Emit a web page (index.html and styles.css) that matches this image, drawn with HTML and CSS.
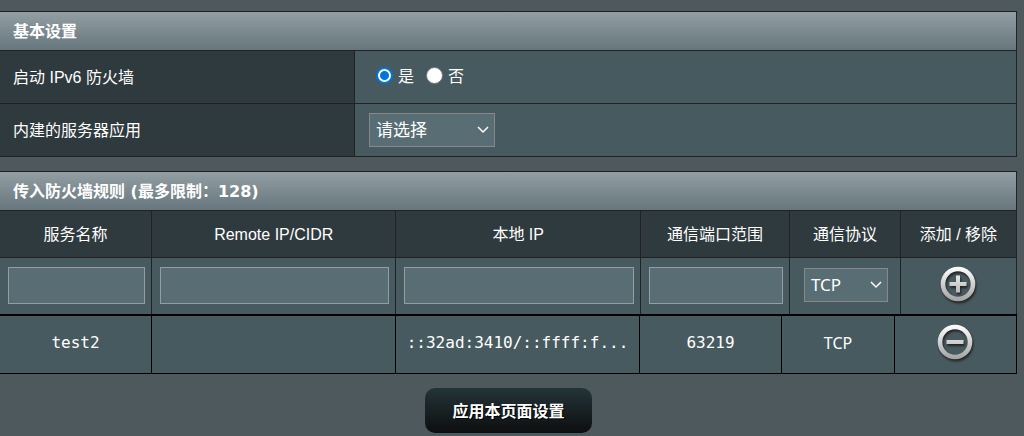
FILE: index.html
```
<!DOCTYPE html>
<html lang="zh-CN">
<head>
	<meta charset="utf-8" />
	<title>IPv6 防火墙</title>
	<link rel="stylesheet" href="styles.css">
</head>

<body>
<form id="ruleForm" name="ruleForm" method="post" action="">

<table class="FormTable">
	<colgroup>
		<col class="col_label" />
		<col />
	</colgroup>
	<thead>
		<tr>
			<td colspan="2">基本设置</td>
		</tr>
	</thead>
	<tbody>
		<tr>
			<th scope="row">启动 IPv6 防火墙</th>
			<td>
				<div class="radios">
					<input type="radio" name="ipv6_fw_enable" id="fw_yes" value="1" checked="checked" />
					<label for="fw_yes">是</label>
					<input type="radio" name="ipv6_fw_enable" id="fw_no" value="0" />
					<label for="fw_no">否</label>
				</div>
			</td>
		</tr>
		<tr>
			<th scope="row"><label for="known_apps">内建的服务器应用</label></th>
			<td>
				<select name="known_apps" id="known_apps" class="input_option apps">
					<option>请选择</option>
				</select>
			</td>
		</tr>
	</tbody>
</table>

<table class="FormTable list_head">
	<colgroup>
		<col class="col_name" />
		<col />
		<col />
		<col class="col_port" />
		<col class="col_proto" />
		<col class="col_edit" />
	</colgroup>
	<thead>
		<tr>
			<td colspan="6">传入防火墙规则 (最多限制：128)</td>
		</tr>
	</thead>
	<tbody>
		<tr>
			<th scope="col">服务名称</th>
			<th scope="col">Remote IP/CIDR</th>
			<th scope="col">本地 IP</th>
			<th scope="col">通信端口范围</th>
			<th scope="col">通信协议</th>
			<th scope="col">添加 / 移除</th>
		</tr>
		<tr>
			<td><input type="text" class="input_text" name="rule_name" aria-label="服务名称" /></td>
			<td><input type="text" class="input_text" name="rule_remote" aria-label="Remote IP/CIDR" /></td>
			<td><input type="text" class="input_text" name="rule_local" aria-label="本地 IP" /></td>
			<td><input type="text" class="input_text" name="rule_port" aria-label="通信端口范围" /></td>
			<td>
				<select name="rule_proto" class="input_option proto" aria-label="通信协议">
					<option>TCP</option>
				</select>
			</td>
			<td>
				<button type="button" class="icon_btn" aria-label="添加">
					<svg width="40" height="40" viewBox="0 0 40 40">
						<defs>
							<linearGradient id="metal" gradientUnits="userSpaceOnUse" x1="0" y1="2" x2="0" y2="36">
								<stop offset="0" stop-color="#ffffff" />
								<stop offset="1" stop-color="#a2a2a2" />
							</linearGradient>
						</defs>
						<circle cx="19" cy="19" r="15" fill="none" stroke="url(#metal)" stroke-width="4.6" />
						<path d="M17 10.5h4v6.500h6.500v4h-6.500v6.500h-4v-6.500h-6.500v-4h6.500z" fill="url(#metal)" />
					</svg>
				</button>
			</td>
		</tr>
	</tbody>
</table>

<table class="list_table">
	<colgroup>
		<col class="col_name" />
		<col />
		<col />
		<col class="col_port" />
		<col class="col_proto" />
		<col class="col_edit" />
	</colgroup>
	<tbody>
		<tr>
			<td>test2</td>
			<td></td>
			<td>::32ad:3410/::ffff:f...</td>
			<td>63219</td>
			<td class="proto_name">TCP</td>
			<td>
				<button type="button" class="icon_btn" aria-label="移除">
					<svg width="40" height="40" viewBox="0 0 40 40">
						<circle cx="19" cy="19" r="15" fill="none" stroke="url(#metal)" stroke-width="4.6" />
						<path d="M10.500 17h17v4h-17z" fill="url(#metal)" />
					</svg>
				</button>
			</td>
		</tr>
	</tbody>
</table>

<div class="apply_gen">
	<button type="submit" class="button_gen">应用本页面设置</button>
</div>

</form>
</body>
</html>
```
FILE: styles.css
```
* {
	box-sizing: border-box;
}
body {
	margin: 0;
	padding: 11px 7px 0 0;
	background-color: #4D595D;
	color: #FFF;
	font-family: "Liberation Sans", "Noto Sans CJK SC", sans-serif;
	font-size: 16px;
	line-height: 24px;
}
table {
	width: 100%;
	table-layout: fixed;
	border-spacing: 0;
}
td, th {
	font-weight: normal;
}

/* form tables */
.FormTable {
	border-top: 1px solid #222;
	margin-bottom: 14px;
}
.FormTable td, .FormTable th {
	border-right: 1px solid #222;
	border-bottom: 1px solid #222;
	height: 53px;
	padding: 0 14px;
	text-align: left;
}
.FormTable th {
	background-color: #2F3A3E;
	padding: 2px 13px 0;
}
.FormTable td {
	background-color: #475A5F;
}
.FormTable thead td {
	background: linear-gradient(to bottom, #929EA3 0%, #67767D 100%);
	height: 39px;
	padding: 2px 13px 0;
	font-family: "DejaVu Sans", "Noto Sans CJK SC", sans-serif;
	font-size: 16px;
	font-weight: bold;
}
.col_label {
	width: 355px;
}

.radios {
	display: flex;
	align-items: center;
}
.radios input {
	width: 17px;
	height: 17px;
	margin: 0 5px 3px 7px;
	appearance: none;
	border: 1px solid #767676;
	border-radius: 50%;
	background-color: #FFF;
}
.radios input:checked {
	border: 2px solid #0075DB;
	background: radial-gradient(circle, #0075DB 4px, #FFF 5px);
}
.radios label {
	margin-right: 5px;
}

.input_text, .input_option {
	border: 1px solid #929EA1;
	background-color: #596E74;
	color: #FFF;
}
.input_text {
	display: block;
	width: 100%;
	height: 37px;
	padding: 0 5px;
	font-size: 16px;
}
.input_option {
	display: block;
	height: 34px;
	padding: 0 6px 1px;
	border-color: #888;
	appearance: none;
	font-family: "Noto Sans", "Noto Sans CJK SC", sans-serif;
	font-size: 17px;
	background-image: url("data:image/svg+xml,%3Csvg xmlns='http://www.w3.org/2000/svg' width='12' height='8'%3E%3Cpath d='M1 1l5 5 5-5' fill='none' stroke='white' stroke-width='1.5'/%3E%3C/svg%3E");
	background-repeat: no-repeat;
	background-position: right 5px center;
}
.apps {
	width: 126px;
}
.proto {
	width: 84px;
	margin: 0 auto;
}

/* rule list */
.list_head {
	margin-bottom: 0;
}
.list_head tbody th {
	height: 47px;
	padding: 2px 0 0;
	text-align: center;
}
.list_head tbody td {
	height: 56px;
	padding: 0 6px 2px 8px;
	border-bottom: 0;
}
.col_name {
	width: 152px;
}
.list_head .col_port {
	width: 149px;
}
.list_head .col_proto {
	width: 111px;
}
.list_head .col_edit {
	width: 116px;
}
.list_table {
	border-top: 2px solid #000;
}
.list_table td {
	height: 58px;
	padding: 0 0 3px;
	border-right: 1px solid #000;
	border-bottom: 1px solid #000;
	background-color: #475A5F;
	font-family: "DejaVu Sans Mono", monospace;
	text-align: center;
}
.list_table .proto_name {
	font-family: "Noto Sans", sans-serif;
}
.list_table .col_port {
	width: 142px;
}
.list_table .col_proto {
	width: 113px;
}
.list_table .col_edit {
	width: 122px;
}
.icon_btn {
	display: block;
	margin: 0 auto;
	padding: 0;
	border: 0;
	background: none;
	cursor: pointer;
}
.icon_btn svg {
	display: block;
	filter: drop-shadow(1px 2px 1px #222);
}

.apply_gen {
	margin-top: 14px;
	text-align: center;
}
.button_gen {
	height: 45px;
	padding: 0 27px 1px;
	border: 0;
	border-radius: 10px;
	background: linear-gradient(to bottom, #233438 0%, #0D0E0F 100%);
	color: #FFF;
	font-family: "Liberation Sans", "Noto Sans CJK SC", sans-serif;
	font-size: 16px;
	font-weight: bold;
	text-shadow: 1px 1px 0 #000;
	cursor: pointer;
}
```
